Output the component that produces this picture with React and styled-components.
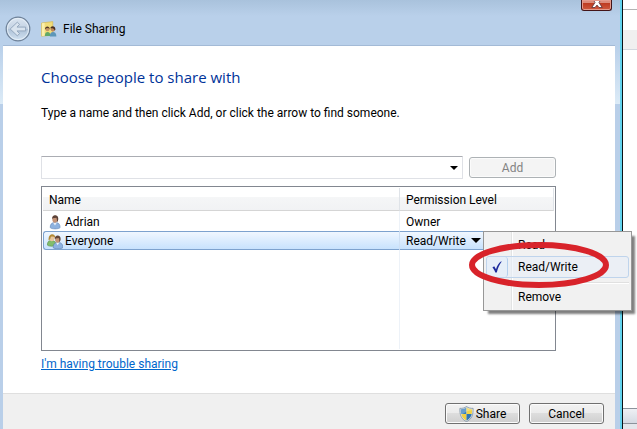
import React, { useState } from 'react';
import styled, { createGlobalStyle } from 'styled-components';

const GlobalStyle = createGlobalStyle`
  *, *::before, *::after {
    box-sizing: border-box;
  }

  body {
    margin: 0;
    overflow: hidden;
    background: #fff;
  }

  body, button, input {
    font-family: Roboto, 'Open Sans', sans-serif;
    font-size: 12px;
    line-height: 16px;
    color: #000;
  }
`;

const Desktop = styled.div`
  display: grid;
  grid-template-columns: 1fr 14px;
  min-height: 100vh;
`;

// Window frame
const Dialog = styled.main`
  position: relative;
  z-index: 1;
  display: flex;
  flex-direction: column;
  padding: 0 5px 0 3px;
  border-right: 1px solid #0b1216;
  box-shadow: inset -2px 0 #62d3ee;
  background:
    linear-gradient(#a9c2dc, #b9d0ea 16px, transparent 16px),
    linear-gradient(#b9d0ea 46px, #dcebf7 104px, #b9cfe9 104px);
`;

const TitleBar = styled.header`
  display: flex;
  align-items: center;
  height: 46px;
  padding: 12px 3px 0 2px;
  border-bottom: 1px solid #a3bad6;
  margin-right: 2px;
`;

const BackButton = styled.button`
  width: 26px;
  height: 26px;
  padding: 0;
  border: 0;
  background: none;

  svg {
    display: block;
  }
`;

const WindowTitle = styled.div`
  display: flex;
  align-items: center;
  gap: 6px;
  margin-left: 10px;
`;

const CloseButton = styled.button`
  align-self: flex-start;
  width: 31px;
  height: 11px;
  margin: -12px 0 0 auto;
  padding: 0;
  border: 1px solid #431418;
  border-top: 0;
  border-radius: 0 0 3px 3px;
  box-shadow: inset 0 0 0 1px #e59a8c;
  background: linear-gradient(#dc8c7c 3px, #bd3a20 3px, #cf5a40);

  svg {
    display: block;
    margin: 0 auto;
  }
`;

const Content = styled.section`
  flex: 1;
  display: flex;
  flex-direction: column;
  margin-right: 2px;
  padding: 19px 59px 21px 38px;
  background: #fff;
`;

const Heading = styled.h1`
  margin: 0;
  font-family: 'Open Sans', sans-serif;
  font-size: 15px;
  font-weight: 400;
  line-height: 24px;
  color: #003399;
`;

const Hint = styled.p`
  margin: 16px 0 35px;
`;

const AddRow = styled.form`
  display: flex;
  align-items: center;
  gap: 6px;
`;

const ComboBox = styled.div`
  flex: 1;
  display: flex;
  height: 23px;
  border: 1px solid #dfe1e6;
  border-top-color: #abadb3;
  border-radius: 1px;
`;

const NameInput = styled.input`
  flex: 1;
  min-width: 0;
  padding: 0 6px;
  border: 0;
  outline: 0;
  background: none;
`;

const ArrowButton = styled.button`
  display: flex;
  align-items: center;
  justify-content: center;
  width: 17px;
  padding: 0;
  border: 0;
  background: none;
`;

const PushButton = styled.button`
  display: flex;
  align-items: center;
  justify-content: center;
  gap: 2px;
  width: ${({ $wide }) => ($wide ? '87px' : '75px')};
  height: 21px;
  padding: 0;
  border: 1px solid #707070;
  border-radius: 3px;
  box-shadow: inset 0 0 0 1px #fbfbfb;
  background: linear-gradient(#f2f2f2, #ebebeb 50%, #dddddd 50%, #cfcfcf);

  &:disabled {
    border-color: #adb2b5;
    background: #f4f4f4;
    color: #838383;
  }
`;

// People list
const ListBox = styled.div`
  flex: 1;
  display: flex;
  margin-top: 7px;
  padding: 1px;
  border: 1px solid #828790;
`;

const PeopleTable = styled.table`
  flex: 1;
  table-layout: fixed;
  border-spacing: 0;
`;

const HeadCell = styled.th`
  width: ${({ $width }) => $width || 'auto'};
  height: 23px;
  padding: 1px 6px 0;
  border-right: 1px solid #dfe3e8;
  border-bottom: 1px solid #d5d5d5;
  background: linear-gradient(#fff 9px, #f5f6f7 9px, #f1f2f4);
  font-weight: 400;
  text-align: left;
`;

const Cell = styled.td`
  height: ${({ $fill }) => ($fill ? 'auto' : '20px')};
  padding: 1px 6px 0 4px;
  border-right: 1px solid #edf2f8;

  &:last-child {
    padding-left: 6px;
    border-right: 0;
  }
`;

const PersonRow = styled.tr`
  ${({ $selected }) => $selected && `
    td {
      height: 19px;
      padding-top: 0;
      border-top: 1px solid #7da2ce;
      border-bottom: 1px solid #7da2ce;
      background: linear-gradient(#f0f7ff, #c8e2fd);
    }
    td:first-child {
      border-left: 1px solid #7da2ce;
      border-radius: 3px 0 0 3px;
      padding-left: 3px;
      border-right-color: #cfe0f4;
    }
    td:last-child {
      border-right: 1px solid #7da2ce;
      border-radius: 0 3px 3px 0;
    }
  `}
`;

const Person = styled.div`
  display: flex;
  align-items: center;
  gap: 2px;
`;

const Permission = styled.div`
  position: relative;
`;

const PermissionButton = styled.button`
  display: flex;
  align-items: center;
  gap: 5px;
  padding: 0;
  border: 0;
  background: none;
`;

// Permission menu, dropped beside the arrow
const Menu = styled.div`
  position: absolute;
  top: -2px;
  left: 77px;
  z-index: 2;
  width: 149px;
  padding: 2px;
  border: 1px solid #979797;
  box-shadow: 4px 4px 2px -1px rgba(0, 0, 0, 0.5);
  background: linear-gradient(90deg, transparent 27px, #e2e3e3 27px, #e2e3e3 28px, #fff 28px, #fff 29px, transparent 29px) #f1f1f1;
`;

const MenuItem = styled.button`
  display: grid;
  grid-template-columns: 21px 1fr;
  align-items: center;
  gap: 10px;
  width: 100%;
  height: 22px;
  padding: 0;
  border: 1px solid ${({ $active }) => ($active ? '#bfd4ec' : 'transparent')};
  border-radius: 3px;
  background: ${({ $active }) => ($active ? 'rgba(232, 239, 248, 0.6)' : 'none')};
  text-align: left;
`;

const CheckSlot = styled.span`
  display: flex;
  align-items: center;
  justify-content: center;
  height: 20px;
  border-right: 1px solid ${({ $checked }) => ($checked ? '#b4d0ee' : 'transparent')};
  border-radius: 3px;
  background: ${({ $checked }) => ($checked ? '#e6eff9' : 'none')};
`;

const Separator = styled.div`
  height: 2px;
  margin: 4px 0 2px 29px;
  border-top: 1px solid #e0e0e0;
  border-bottom: 1px solid #fff;
`;

const Highlight = styled.svg`
  position: absolute;
  top: 10px;
  left: -16px;
  pointer-events: none;
`;

const HelpLink = styled.a`
  align-self: flex-start;
  margin-top: 5px;
  color: #0066cc;
`;

const Footer = styled.footer`
  display: flex;
  justify-content: flex-end;
  gap: 9px;
  height: 36px;
  margin-right: 2px;
  padding: 9px 11px 0 0;
  border-top: 1px solid #dfdfdf;
  background: #f0f0f0;
`;

// Window that shows from behind on the right
const BackWindow = styled.aside`
  display: flex;
  flex-direction: column;
  background: #fff;
`;

const BackTitle = styled.div`
  height: 10px;
  margin-bottom: 20px;
  border-bottom: 1px solid #b4b4b4;
`;

const BackToolbar = styled.div`
  height: 20px;
  border-bottom: 1px solid #d3d8df;
  background: #f0f0f0;
`;

const BackStatus = styled.div`
  height: 21px;
  margin-top: auto;
  border-top: 1px solid #8c939c;
  background: linear-gradient(#eef0f4, #d5dae3 14px, #8c939c 14px, #8c939c 15px, #e4e7ec 15px);
`;

const BackIcon = () => (
  <svg width="26" height="26" viewBox="0 0 26 26" aria-hidden="true">
    <defs>
      <linearGradient id="orb" x1="0" y1="0" x2="0" y2="1">
        <stop offset="0" stopColor="#dce6f1" />
        <stop offset="0.5" stopColor="#c3d2e3" />
        <stop offset="0.52" stopColor="#afc3d9" />
        <stop offset="1" stopColor="#d3e3f2" />
      </linearGradient>
    </defs>
    <circle cx="13" cy="13" r="11.8" fill="url(#orb)" stroke="#6f8299" strokeWidth="1.2" />
    <circle cx="13" cy="13" r="10.6" fill="none" stroke="#e8f0f8" strokeWidth="0.9" />
    <path d="M5.2 13 12.3 6.2 14.6 8.4 12 11.1H20.6V14.9H12L14.6 17.6 12.3 19.8Z" fill="#d9e4ef" stroke="#8fa3ba" strokeWidth="0.9" />
  </svg>
);

const ShareIcon = () => (
  <svg width="16" height="16" viewBox="0 0 16 16" aria-hidden="true">
    <path d="M.5 2 11.8.6V14.2L.5 15.2Z" fill="#f1dc79" stroke="#d4b64c" strokeWidth="0.6" />
    <path d="M.9 2.3 3.6 2V14.8L.9 15Z" fill="#fbf0ae" />
    <path d="M3.9 15c0-3.2 1.2-4.1 2.8-4.1s2.7 1 2.8 4.1Z" fill="#62a968" />
    <circle cx="6.5" cy="8.2" r="2" fill="#c59462" />
    <path d="M4 8.4C3.6 4.6 8.7 4.4 8.8 8 7.4 6.8 5.6 6.7 4 8.4Z" fill="#523828" />
    <path d="M8.8 15.5c0-3.4 1.3-4.6 3.2-4.6s3.4 1.4 3.4 4.6Z" fill="#5d96b8" />
    <circle cx="11.9" cy="8.2" r="2.2" fill="#be875b" />
    <path d="M9.3 7.4C9.6 4.3 14.5 4.3 14.4 8.5c-.8 1.3-1 1.2-1 .2-.8-1.3-2.4-1.6-4.1-1.3Z" fill="#4a3024" />
  </svg>
);

const UserIcon = () => (
  <svg width="16" height="16" viewBox="0 0 16 16" aria-hidden="true">
    <path d="M3.2 13.6c0-3.6 1.5-5.1 4.9-5.1s5 1.5 5 5.1c-1 1.7-8.8 1.7-9.9 0Z" fill="#8eb2df" stroke="#6287b8" strokeWidth="0.6" />
    <path d="M6.1 8.7 8 11.6 10 8.6Z" fill="#e6eef8" />
    <ellipse cx="7.9" cy="5.1" rx="2.6" ry="3.7" fill="#c49376" />
    <path d="M5.2 4.9C4.5.1 12-.1 11.2 5.4c-.3 2.1-1 2.8-1.4 2.7.4-2 .1-3.4-.6-4.3-1.5.4-3.1.1-4 1.1Z" fill="#5c4238" />
  </svg>
);

const GroupIcon = () => (
  <svg width="16" height="16" viewBox="0 0 16 16" aria-hidden="true">
    <path d="M.4 12.1c0-3.3 1.3-4.6 4-4.6s4.6 1.3 4.6 4.6c-1.3 1.5-7.6 1.5-8.6 0Z" fill="#82bd6b" stroke="#528f45" strokeWidth="0.6" />
    <ellipse cx="4.9" cy="5" rx="2.5" ry="3.2" fill="#e6c59e" />
    <path d="M1.6 7.5C.7-.6 8.8-.3 8.1 4.9 6.8 3.6 5.3 3.2 3.8 4c-.4 1.3-.5 2.6-2.2 3.5Z" fill="#b28a37" />
    <path d="M6.2 14.7c0-3.8 1.7-5.3 4.8-5.3s4.8 1.5 4.8 5.3c-1.4 1.4-8.5 1.4-9.6 0Z" fill="#8db2e0" stroke="#587cad" strokeWidth="0.6" />
    <path d="M9 9.4 10.6 12.2 12.5 9.4Z" fill="#ecf3fa" />
    <ellipse cx="10.6" cy="6.4" rx="2.5" ry="3.3" fill="#c59676" />
    <path d="M7.8 6.1C7.2 1.1 14.4 1.2 13.6 6.4c-.3 1.9-.9 2.6-1.4 2.4.3-2 0-3-.6-3.9-1.3.4-2.8.2-3.8 1.2Z" fill="#62463a" />
  </svg>
);

const ShieldIcon = () => (
  <svg width="15" height="16" viewBox="0 0 15 16" aria-hidden="true">
    <defs>
      <clipPath id="shield">
        <path d="M7.5 1.6C5.8 2.8 3.8 3.3 1.9 3.2 1.6 8.6 3.4 12.5 7.5 14.5c4.1-2 5.9-5.9 5.6-11.3-1.9.1-3.9-.4-5.6-1.6Z" />
      </clipPath>
    </defs>
    <path d="M7.5.5C5.6 1.9 3.2 2.6.9 2.3.5 8.8 2.5 13.4 7.5 15.6c5-2.2 7-6.8 6.6-13.3C11.8 2.6 9.4 1.9 7.5.5Z" fill="#dde5ec" stroke="#708599" strokeWidth="0.7" />
    <g clipPath="url(#shield)">
      <path d="M0 0h7.5v8H0Z" fill="#347dbb" />
      <path d="M7.5 0H15v8H7.5Z" fill="#f0d348" />
      <path d="M0 8h7.5v8H0Z" fill="#efcf42" />
      <path d="M7.5 8H15v8H7.5Z" fill="#2e75b4" />
      <path d="M0 0h15v4C10 4 5 6 2 10Z" fill="#fff" opacity="0.25" />
    </g>
  </svg>
);

const Arrow = ({ size = 8 }) => (
  <svg width={size} height={size / 2} viewBox="0 0 10 5" aria-hidden="true">
    <path d="M0 0H10L5 5Z" fill="#000" />
  </svg>
);

const CheckIcon = () => (
  <svg width="10" height="12" viewBox="0 0 10 12" aria-hidden="true">
    <path d="M.4 6.4 2.2 5.3 4 8.2C5 5 6.6 2.2 9.2.3L9.6.8C7.4 3.9 5.9 7.1 4.8 11.4H3.3C2.6 9.2 1.7 7.7.4 6.4Z" fill="#1c2a9c" />
  </svg>
);

const people = [
  { name: 'Adrian', permission: 'Owner', icon: <UserIcon /> },
  { name: 'Everyone', permission: 'Read/Write', icon: <GroupIcon />, selected: true },
];

const PermissionMenu = ({ value, onSelect }) => (
  <Menu role="menu">
    {['Read', 'Read/Write'].map((option) => (
      <MenuItem
        key={option}
        type="button"
        role="menuitemradio"
        aria-checked={option === value}
        $active={option === value}
        onClick={() => onSelect(option)}
      >
        <CheckSlot $checked={option === value}>{option === value && <CheckIcon />}</CheckSlot>
        {option}
      </MenuItem>
    ))}
    <Separator role="separator" />
    <MenuItem type="button" role="menuitem">
      <CheckSlot />
      Remove
    </MenuItem>
    <Highlight width="142" height="47" viewBox="0 0 142 47" aria-hidden="true">
      <ellipse cx="71" cy="23" rx="67" ry="20" fill="none" stroke="#d8232a" strokeWidth="6" />
    </Highlight>
  </Menu>
);

const App = () => {
  const [name, setName] = useState('');
  const [permission, setPermission] = useState('Read/Write');
  const [menuOpen, setMenuOpen] = useState(true);

  const handleSelect = (option) => {
    setPermission(option);
    setMenuOpen(false);
  };

  return (
    <Desktop>
      <GlobalStyle />
      <Dialog>
        <TitleBar>
          <BackButton type="button" aria-label="Back">
            <BackIcon />
          </BackButton>
          <WindowTitle>
            <ShareIcon />
            File Sharing
          </WindowTitle>
          <CloseButton type="button" aria-label="Close">
            <svg width="12" height="8" viewBox="0 0 12 8" aria-hidden="true">
              <path d="M.8-3.5 4-3.5 6-1 8-3.5H11.2L8 1.5 11.2 6.5H8L6 4.1 4 6.5H.8L4 1.5Z" fill="#fff" stroke="#5b3038" strokeWidth="0.8" />
            </svg>
          </CloseButton>
        </TitleBar>

        <Content>
          <Heading>Choose people to share with</Heading>
          <Hint>Type a name and then click Add, or click the arrow to find someone.</Hint>
          <AddRow onSubmit={(e) => e.preventDefault()}>
            <ComboBox>
              <NameInput aria-label="Name" value={name} onChange={(e) => setName(e.target.value)} />
              <ArrowButton type="button" aria-label="Find someone">
                <Arrow />
              </ArrowButton>
            </ComboBox>
            <PushButton $wide disabled={!name}>Add</PushButton>
          </AddRow>

          <ListBox>
            <PeopleTable>
              <thead>
                <tr>
                  <HeadCell>Name</HeadCell>
                  <HeadCell $width="154px">Permission Level</HeadCell>
                </tr>
              </thead>
              <tbody>
                {people.map((person) => (
                  <PersonRow key={person.name} $selected={person.selected}>
                    <Cell>
                      <Person>
                        {person.icon}
                        {person.name}
                      </Person>
                    </Cell>
                    <Cell>
                      {person.selected ? (
                        <Permission>
                          <PermissionButton type="button" aria-haspopup="menu" onClick={() => setMenuOpen(!menuOpen)}>
                            {permission}
                            <Arrow size={10} />
                          </PermissionButton>
                          {menuOpen && <PermissionMenu value={permission} onSelect={handleSelect} />}
                        </Permission>
                      ) : (
                        person.permission
                      )}
                    </Cell>
                  </PersonRow>
                ))}
                <tr>
                  <Cell $fill />
                  <Cell $fill />
                </tr>
              </tbody>
            </PeopleTable>
          </ListBox>
          <HelpLink href="#trouble">I'm having trouble sharing</HelpLink>
        </Content>

        <Footer>
          <PushButton type="button">
            <ShieldIcon />
            Share
          </PushButton>
          <PushButton type="button">Cancel</PushButton>
        </Footer>
      </Dialog>

      <BackWindow>
        <BackTitle />
        <BackToolbar />
        <BackStatus />
      </BackWindow>
    </Desktop>
  );
};

export default App;
